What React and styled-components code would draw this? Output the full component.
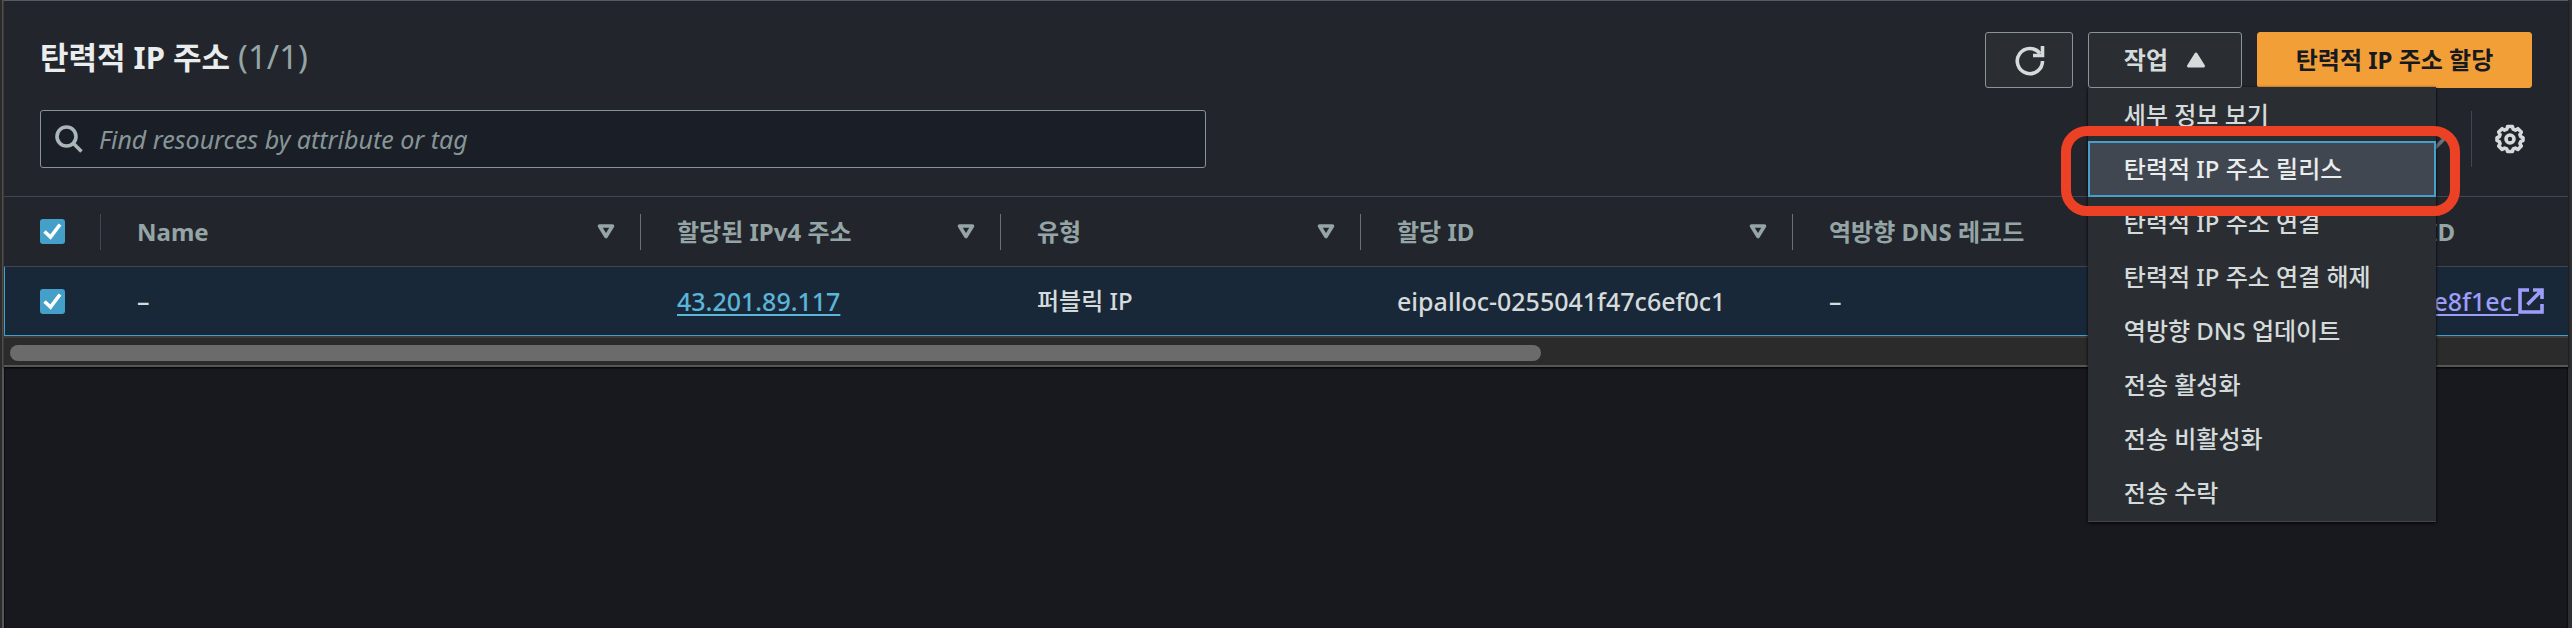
import React from "react";
import styled, { createGlobalStyle, css } from "styled-components";

const Global = createGlobalStyle`
  * { box-sizing: border-box; }
  html, body, #root { height: 100%; }
  body {
    margin: 0;
    background: #18191e;
    color: #d5dbdb;
    font: 500 24px/32px "Noto Sans", "Noto Sans CJK KR", sans-serif;
    overflow: hidden;
  }
  button, input { font: inherit; color: inherit; }
`;

const Page = styled.main`
  min-height: 100%;
  border-left: 2px solid #2b2b2b;
  border-right: 4px solid #2c2f34;
  background: #18191e;
  display: flex;
`;

const Content = styled.div`
  flex: 1;
  min-width: 0;
  border-left: 2px solid #565656;
  box-shadow: inset 1px 0 1px #0e0e10, inset -1px 0 1px #0e0e10;
`;

const Panel = styled.section`
  background: #22252c;
  border-top: 1px solid #545b64;
  border-bottom: 2px solid #565656;
  box-shadow: 0 1px 2px #000;
`;

const Header = styled.header`
  display: flex;
  justify-content: space-between;
  align-items: flex-start;
  padding: 31px 36px 0;
`;

const Title = styled.h2`
  margin: 0;
  font-size: 31px;
  line-height: 50px;
  font-weight: 700;
  color: #eaeded;
`;

const Counter = styled.span`
  font-size: 33px;
  font-weight: 400;
  color: #95a5a6;
`;

const Actions = styled.div`
  display: flex;
  gap: 15px;
`;

const Button = styled.button`
  height: 56px;
  padding: 0 35px;
  display: flex;
  align-items: center;
  justify-content: center;
  gap: 18px;
  border-radius: 3px;
  font-weight: 700;
  white-space: nowrap;
  border: 1px solid ${(p) => (p.$primary ? "#f29f38" : "#879596")};
  background: ${(p) => (p.$primary ? "#f29f38" : "#2a2e33")};
  color: ${(p) => (p.$primary ? "#16191f" : "#d5dbdb")};
  ${(p) => p.$primary && css`min-width: 275px;`}
  ${(p) => p.$icon && css`width: 88px; padding: 0;`}
`;

const MenuAnchor = styled.div`
  position: relative;
  z-index: 2;
`;

const Menu = styled.ul`
  position: absolute;
  z-index: -1;
  top: 55px;
  left: 0;
  width: 348px;
  margin: 0;
  padding: 0;
  list-style: none;
  background: #2a2e33;
  box-shadow: 0 1px 3px #000;
  border-bottom: 1px solid #414750;
`;

const MenuItem = styled.li`
  position: relative;
  & + & { margin-top: -2px; }
`;

const MenuButton = styled.button`
  display: block;
  width: 100%;
  height: 56px;
  padding: 0 34px;
  text-align: left;
  border: 2px solid ${(p) => (p.$active ? "#44a0c8" : "transparent")};
  background: ${(p) => (p.$active ? "#414750" : "transparent")};
  color: ${(p) => (p.$active ? "#eaeded" : "#d5dbdb")};
`;

const Highlight = styled.span`
  position: absolute;
  z-index: 3;
  inset: -15px -24px -19px -27px;
  border: 10px solid #ec4125;
  border-radius: 26px;
  pointer-events: none;
`;

const Tools = styled.div`
  display: flex;
  justify-content: space-between;
  align-items: center;
  padding: 22px 36px 28px;
`;

const Search = styled.label`
  width: 1166px;
  height: 58px;
  padding: 0 14px;
  display: flex;
  align-items: center;
  gap: 16px;
  border: 1px solid #879596;
  border-radius: 3px;
  background: #1a1f27;
  color: #aab7b8;
`;

const SearchInput = styled.input`
  flex: 1;
  min-width: 0;
  padding: 0;
  border: 0;
  outline: 0;
  background: none;
  font-size: 25px;
  font-weight: 400;
  &::placeholder { color: #879596; font-style: italic; opacity: 1; }
`;

const Pager = styled.div`
  display: flex;
  align-items: center;
  height: 56px;
`;

const IconButton = styled.button`
  display: flex;
  padding: 0;
  border: 0;
  background: none;
  color: ${(p) => (p.$muted ? "#687078" : "#d5dbdb")};
`;

const Settings = styled.div`
  display: flex;
  align-items: center;
  align-self: stretch;
  margin-left: 24px;
  padding: 0 7px 0 23px;
  border-left: 1px solid #414750;
`;

const Table = styled.table`
  width: 100%;
  table-layout: fixed;
  border-collapse: separate;
  border-spacing: 0;
`;

const Col = styled.col`
  width: ${(p) => p.$w};
`;

const Th = styled.th`
  height: 71px;
  padding: 0;
  border: solid #414750;
  border-width: 1px 0;
  text-align: left;
  color: #95a5a6;
`;

const HeadCell = styled.div`
  display: flex;
  align-items: center;
  justify-content: space-between;
  height: 36px;
  padding: 0 24px 0 36px;
  white-space: nowrap;
  border-right: 1px solid ${(p) => (p.$last ? "transparent" : p.$dim ? "#414750" : "#687078")};
`;

const Td = styled.td`
  height: 69px;
  padding: 0 0 0 36px;
  background: #192838;
  border-bottom: 1px solid #44a0c8;
  font-size: ${(p) => (p.$korean ? "24px" : "25px")};
  white-space: nowrap;
  &:first-child { border-left: 1px solid #44a0c8; padding-left: 35px; }
`;

const Check = styled.input`
  appearance: none;
  display: block;
  width: 25px;
  height: 25px;
  margin: 0;
  border-radius: 3px;
  background: #44a0c8 url("data:image/svg+xml,%3Csvg xmlns='http://www.w3.org/2000/svg' viewBox='0 0 25 25'%3E%3Cpath d='M4.5 12.5l6 5.5L20 5.5' fill='none' stroke='white' stroke-width='3.6'/%3E%3C/svg%3E");
`;

const Link = styled.a`
  color: ${(p) => (p.$visited ? "#9f9dfa" : "#5bb5d9")};
  text-decoration: underline;
  text-decoration-thickness: 2px;
  text-underline-offset: 3px;
  svg { vertical-align: -3px; }
`;

const ScrollTrack = styled.div`
  height: 29px;
  padding: 7px 6px 4px;
  border-top: 2px solid #3b3b3b;
  background: #2b2b2b;
`;

const ScrollThumb = styled.div`
  width: 60%;
  height: 16px;
  border-radius: 8px;
  background: #6b6b6b;
`;

const SortIcon = () => (
  <svg width="20" height="18" viewBox="0 0 20 18" fill="none" stroke="currentColor" strokeWidth="3.600" strokeLinejoin="round">
    <path d="M3.500 3h13l-6.500 10.500z" />
  </svg>
);

const columns = [
  { label: "Name", sort: true },
  { label: "할당된 IPv4 주소", sort: true },
  { label: "유형", sort: true },
  { label: "할당 ID", sort: true },
  { label: "역방향 DNS 레코드", sort: true },
  { label: "연결된 인스턴스 ID" },
];

const menu = [
  "세부 정보 보기",
  "탄력적 IP 주소 릴리스",
  "탄력적 IP 주소 연결",
  "탄력적 IP 주소 연결 해제",
  "역방향 DNS 업데이트",
  "전송 활성화",
  "전송 비활성화",
  "전송 수락",
];

export default function App() {
  return (
    <Page>
      <Global />
      <Content>
        <Panel>
          <Header>
            <Title>
              탄력적 IP 주소 <Counter>(1/1)</Counter>
            </Title>
            <Actions>
              <Button $icon aria-label="Refresh">
                <svg width="32" height="32" viewBox="0 0 32 32" fill="none" stroke="currentColor" strokeWidth="3.600">
                  <path d="M29.500 17A12.600 12.600 0 1 1 27 9.500" />
                  <path d="M29.500 2v9.500H20" />
                </svg>
              </Button>
              <MenuAnchor>
                <Button aria-expanded="true">
                  작업
                  <svg width="20" height="18" viewBox="0 0 20 18" fill="currentColor" stroke="currentColor" strokeWidth="3" strokeLinejoin="round">
                    <path d="M2.500 15h15L10 3z" />
                  </svg>
                </Button>
                <Menu>
                  {menu.map((label, i) => (
                    <MenuItem key={label}>
                      <MenuButton $active={i === 1}>{label}</MenuButton>
                      {i === 1 && <Highlight />}
                    </MenuItem>
                  ))}
                </Menu>
              </MenuAnchor>
              <Button $primary>탄력적 IP 주소 할당</Button>
            </Actions>
          </Header>
          <Tools>
            <Search>
              <svg width="28" height="28" viewBox="0 0 28 28" fill="none" stroke="currentColor" strokeWidth="3.6">
                <circle cx="11.500" cy="11.500" r="9.500" />
                <path d="M18 18l8.500 8.500" />
              </svg>
              <SearchInput aria-label="Search" placeholder="Find resources by attribute or tag" />
            </Search>
            <Pager>
              <IconButton $muted aria-label="Next page">
                <svg width="18" height="30" viewBox="0 0 18 30" fill="none" stroke="currentColor" strokeWidth="3.600">
                  <path d="M2 2l13 13L2 28" />
                </svg>
              </IconButton>
              <Settings>
                <IconButton aria-label="Preferences">
                  <svg width="30" height="30" viewBox="0 0 30 30" fill="none" stroke="currentColor" strokeWidth="3.600" strokeLinejoin="round">
                    <path d="M12.600 2.500h4.800l.8 2.700 2.200.9 2.500-1.400 3.400 3.400-1.400 2.500.9 2.200 2.200.8v3l-2.200.8-.9 2.200 1.400 2.500-3.400 3.400-2.500-1.400-2.200.9-.8 2.500h-4.800l-.8-2.500-2.200-.9-2.500 1.400-3.400-3.400 1.400-2.500-.9-2.200-2.200-.8v-3l2.200-.8.900-2.200-1.400-2.500 3.400-3.400 2.500 1.400 2.200-.9z" />
                    <circle cx="15" cy="15" r="4" />
                  </svg>
                </IconButton>
              </Settings>
            </Pager>
          </Tools>
          <Table>
            <colgroup>
              <Col $w="97px" />
              <Col $w="540px" />
              <Col $w="360px" />
              <Col $w="360px" />
              <Col $w="432px" />
              <Col $w="432px" />
              <Col />
            </colgroup>
            <thead>
              <tr>
                <Th>
                  <HeadCell $dim>
                    <Check type="checkbox" defaultChecked aria-label="Select all" />
                  </HeadCell>
                </Th>
                {columns.map((c, i) => (
                  <Th key={c.label}>
                    <HeadCell $last={i === columns.length - 1}>
                      {c.label}
                      {c.sort && <SortIcon />}
                    </HeadCell>
                  </Th>
                ))}
              </tr>
            </thead>
            <tbody>
              <tr>
                <Td>
                  <Check type="checkbox" defaultChecked aria-label="Select 43.201.89.117" />
                </Td>
                <Td>–</Td>
                <Td><Link href="#address">43.201.89.117</Link></Td>
                <Td $korean>퍼블릭 IP</Td>
                <Td>eipalloc-0255041f47c6ef0c1</Td>
                <Td>–</Td>
                <Td>
                  <Link href="#instance" $visited>
                    i-05c2b7d94a0e8f1ec{" "}
                    <svg width="26" height="26" viewBox="0 0 26 26" fill="none" stroke="currentColor" strokeWidth="3.600">
                      <path d="M11 2H2v22h22v-8M15 2h9v9M24 2L9.500 16.500" />
                    </svg>
                  </Link>
                </Td>
              </tr>
            </tbody>
          </Table>
          <ScrollTrack>
            <ScrollThumb />
          </ScrollTrack>
        </Panel>
      </Content>
    </Page>
  );
}
